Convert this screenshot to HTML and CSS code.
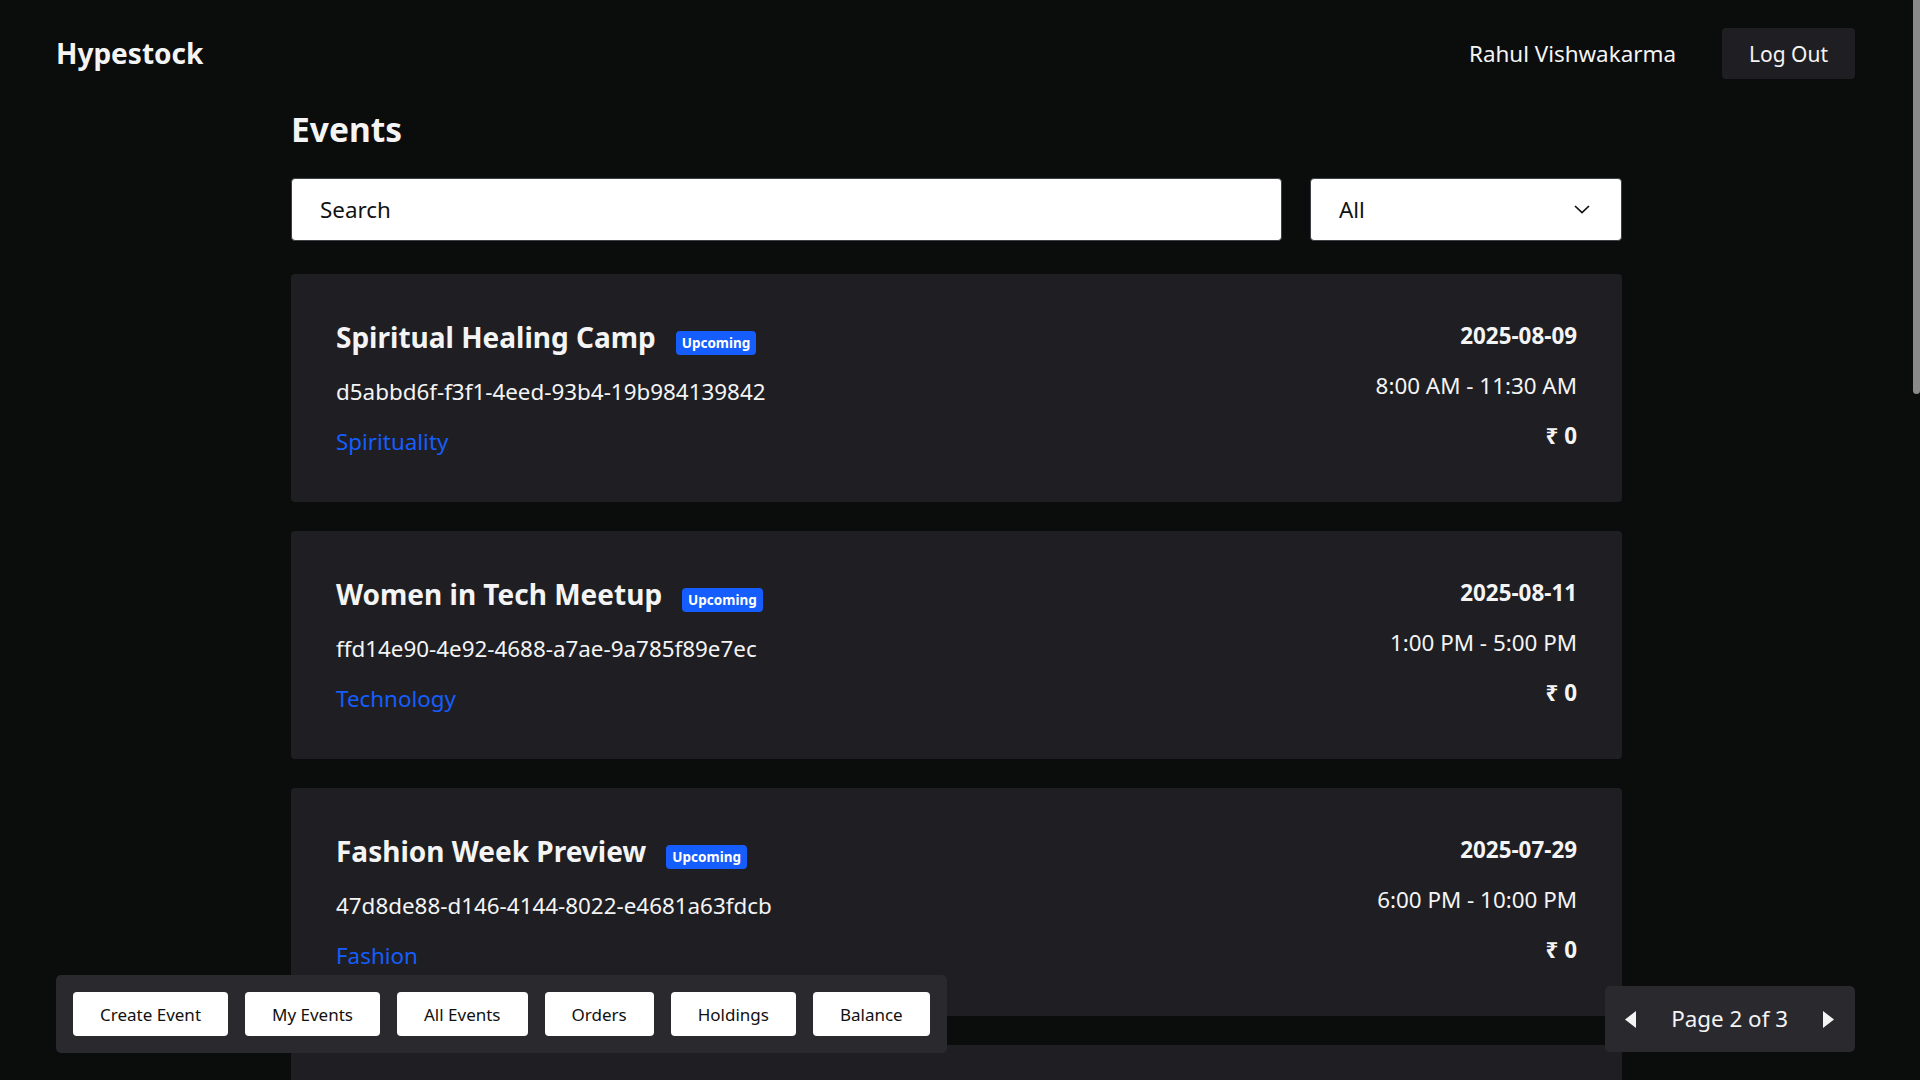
FILE: index.html
```html
<!DOCTYPE html>
<html lang="en">
<head>
<meta charset="utf-8">
<title>Hypestock - Events</title>
<link rel="stylesheet" href="styles.css">
</head>
<body>
<header class="topbar">
  <div class="logo">Hypestock</div>
  <div class="user">
    <span class="user-name">Rahul Vishwakarma</span>
    <button class="logout">Log Out</button>
  </div>
</header>

<main class="content">
  <h1 class="page-title">Events</h1>
  <div class="filters">
    <div class="search">Search</div>
    <div class="select">
      <span>All</span>
      <svg class="chevron" width="16" height="9" viewBox="0 0 16 9"><polyline points="1,1 8,7.5 15,1" fill="none" stroke="#111" stroke-width="1.7"/></svg>
    </div>
  </div>

  <div class="event-list">
    <article class="card">
      <div class="card-left">
        <div class="title-row"><h2 class="event-title">Spiritual Healing Camp</h2><span class="badge">Upcoming</span></div>
        <div class="event-id">d5abbd6f-f3f1-4eed-93b4-19b984139842</div>
        <div class="event-cat">Spirituality</div>
      </div>
      <div class="card-right">
        <div class="event-date">2025-08-09</div>
        <div class="event-time">8:00 AM - 11:30 AM</div>
        <div class="event-price">₹ 0</div>
      </div>
    </article>
    <article class="card">
      <div class="card-left">
        <div class="title-row"><h2 class="event-title">Women in Tech Meetup</h2><span class="badge">Upcoming</span></div>
        <div class="event-id">ffd14e90-4e92-4688-a7ae-9a785f89e7ec</div>
        <div class="event-cat">Technology</div>
      </div>
      <div class="card-right">
        <div class="event-date">2025-08-11</div>
        <div class="event-time">1:00 PM - 5:00 PM</div>
        <div class="event-price">₹ 0</div>
      </div>
    </article>
    <article class="card">
      <div class="card-left">
        <div class="title-row"><h2 class="event-title">Fashion Week Preview</h2><span class="badge">Upcoming</span></div>
        <div class="event-id">47d8de88-d146-4144-8022-e4681a63fdcb</div>
        <div class="event-cat">Fashion</div>
      </div>
      <div class="card-right">
        <div class="event-date">2025-07-29</div>
        <div class="event-time">6:00 PM - 10:00 PM</div>
        <div class="event-price">₹ 0</div>
      </div>
    </article>
    <article class="card">
      <div class="card-left">
        <div class="title-row"><h2 class="event-title">Startup Pitch Night</h2><span class="badge">Upcoming</span></div>
        <div class="event-id">b3c91f2e-7a44-4c1d-9e02-5f6a8d3b1c70</div>
        <div class="event-cat">Business</div>
      </div>
      <div class="card-right">
        <div class="event-date">2025-08-15</div>
        <div class="event-time">7:00 PM - 9:30 PM</div>
        <div class="event-price">₹ 0</div>
      </div>
    </article>
    <article class="card">
      <div class="card-left">
        <div class="title-row"><h2 class="event-title">Indie Music Festival</h2><span class="badge">Upcoming</span></div>
        <div class="event-id">2e8f4a61-93bd-4f07-a1c5-7d20e9b6f4a3</div>
        <div class="event-cat">Music</div>
      </div>
      <div class="card-right">
        <div class="event-date">2025-08-20</div>
        <div class="event-time">4:00 PM - 11:00 PM</div>
        <div class="event-price">₹ 0</div>
      </div>
    </article>
    <article class="card">
      <div class="card-left">
        <div class="title-row"><h2 class="event-title">City Marathon 2025</h2><span class="badge">Upcoming</span></div>
        <div class="event-id">9c1d7e35-5b28-4e6a-8f90-c4a2b1d3e857</div>
        <div class="event-cat">Sports</div>
      </div>
      <div class="card-right">
        <div class="event-date">2025-08-24</div>
        <div class="event-time">5:30 AM - 10:00 AM</div>
        <div class="event-price">₹ 0</div>
      </div>
    </article>
    <article class="card">
      <div class="card-left">
        <div class="title-row"><h2 class="event-title">Street Food Carnival</h2><span class="badge">Upcoming</span></div>
        <div class="event-id">61f0a2d8-c7e3-4b59-9d14-3a8e5f2c6b09</div>
        <div class="event-cat">Food</div>
      </div>
      <div class="card-right">
        <div class="event-date">2025-08-30</div>
        <div class="event-time">12:00 PM - 9:00 PM</div>
        <div class="event-price">₹ 0</div>
      </div>
    </article>
    <article class="card">
      <div class="card-left">
        <div class="title-row"><h2 class="event-title">Photography Workshop</h2><span class="badge">Upcoming</span></div>
        <div class="event-id">d8a4b6c2-1e97-4f3a-b058-e2c7f91a4d36</div>
        <div class="event-cat">Art</div>
      </div>
      <div class="card-right">
        <div class="event-date">2025-09-02</div>
        <div class="event-time">10:00 AM - 2:00 PM</div>
        <div class="event-price">₹ 0</div>
      </div>
    </article>
    <article class="card">
      <div class="card-left">
        <div class="title-row"><h2 class="event-title">Stand-up Comedy Night</h2><span class="badge">Upcoming</span></div>
        <div class="event-id">4b7e2c19-f6d8-4a03-8c5e-91b3d0a7f2e4</div>
        <div class="event-cat">Entertainment</div>
      </div>
      <div class="card-right">
        <div class="event-date">2025-09-06</div>
        <div class="event-time">8:00 PM - 10:30 PM</div>
        <div class="event-price">₹ 0</div>
      </div>
    </article>
    <article class="card">
      <div class="card-left">
        <div class="title-row"><h2 class="event-title">AI &amp; Robotics Expo</h2><span class="badge">Upcoming</span></div>
        <div class="event-id">a0c5f8e3-2d71-4b96-b4e8-6f1a9c2d7e53</div>
        <div class="event-cat">Technology</div>
      </div>
      <div class="card-right">
        <div class="event-date">2025-09-12</div>
        <div class="event-time">9:00 AM - 6:00 PM</div>
        <div class="event-price">₹ 0</div>
      </div>
    </article>
  </div>
</main>

<nav class="bottom-nav">
  <button class="nav-btn">Create Event</button>
  <button class="nav-btn">My Events</button>
  <button class="nav-btn">All Events</button>
  <button class="nav-btn">Orders</button>
  <button class="nav-btn">Holdings</button>
  <button class="nav-btn">Balance</button>
</nav>

<div class="pager">
  <svg class="arrow" width="11" height="17" viewBox="0 0 11 17"><polygon points="11,0 11,17 0,8.5" fill="#f4f4f5"/></svg>
  <span class="pager-text">Page 2 of 3</span>
  <svg class="arrow" width="11" height="17" viewBox="0 0 11 17"><polygon points="0,0 0,17 11,8.5" fill="#f4f4f5"/></svg>
</div>

<div class="scroll-thumb"></div>
</body>
</html>
```

FILE: styles.css
```css
html {
  background: #0b0c0c;
}
body {
  margin: 0 7px 0 0;
  background: #0b0c0c;
  color: #f4f4f5;
  font-family: "Noto Sans", "Open Sans", sans-serif;
}
.scroll-thumb {
  position: fixed;
  top: 0;
  right: 0;
  width: 7px;
  height: 394px;
  background: #8a8a8a;
  border-radius: 0 0 4px 4px;
}
.topbar {
  display: flex;
  align-items: center;
  justify-content: space-between;
  padding: 28px 58px 0 56px;
  height: 51px;
}
.logo {
  font-size: 28px;
  font-weight: 700;
  line-height: 36px;
  margin-top: -2px;
}
.user {
  display: flex;
  align-items: center;
  gap: 46px;
}
.user-name {
  font-size: 22.4px;
  line-height: 30px;
}
.logout {
  background: #1f1f23;
  color: #f4f4f5;
  border: none;
  border-radius: 4px;
  height: 51px;
  padding: 0 27px;
  font-family: inherit;
  font-size: 21px;
}
.content {
  width: 1331px;
  margin: 0 auto;
  padding: 30px 0 145px;
}
.page-title {
  margin: 0;
  font-size: 33.5px;
  line-height: 40px;
  font-weight: 700;
}
.filters {
  display: flex;
  gap: 28px;
  margin-top: 29px;
}
.search,
.select {
  box-sizing: border-box;
  height: 63px;
  background: #fff;
  border: 1px solid #3f3f46;
  border-radius: 4px;
  color: #111;
  font-size: 22.4px;
  display: flex;
  align-items: center;
  padding: 0 28px;
}
.search {
  flex: 1;
}
.select {
  width: 312px;
  justify-content: space-between;
  padding-right: 31px;
}
.event-list {
  display: flex;
  flex-direction: column;
  gap: 29px;
  margin-top: 33px;
}
.card {
  background: #1f1f23;
  border-radius: 4px;
  padding: 45px 45px 44px;
  display: flex;
  justify-content: space-between;
}
.card-left,
.card-right {
  display: flex;
  flex-direction: column;
}
.card-right {
  align-items: flex-end;
  gap: 17px;
}
.title-row {
  display: flex;
  align-items: baseline;
  gap: 20px;
}
.event-title {
  margin: 0;
  font-size: 28px;
  line-height: 36px;
  font-weight: 700;
}
.badge {
  background: #155dfc;
  color: #fff;
  font-size: 13.5px;
  font-weight: 700;
  line-height: 24px;
  padding: 0 6px;
  border-radius: 4px;
}
.event-id {
  font-size: 22.4px;
  line-height: 33px;
  margin-top: 20px;
}
.event-cat {
  font-size: 22.4px;
  line-height: 33px;
  margin-top: 17px;
  color: #155dfc;
}
.event-date,
.event-price {
  font-size: 22.4px;
  line-height: 33px;
  font-weight: 700;
}
.event-time {
  font-size: 22.4px;
  line-height: 33px;
}
.bottom-nav {
  position: fixed;
  left: 56px;
  bottom: 27px;
  display: flex;
  gap: 17px;
  padding: 17px;
  background: #29292e;
  border-radius: 5px;
}
.nav-btn {
  background: #fff;
  color: #111;
  border: none;
  border-radius: 4px;
  height: 44px;
  padding: 0 27px;
  font-family: inherit;
  font-size: 17px;
}
.pager {
  position: fixed;
  right: 65px;
  bottom: 28px;
  height: 66px;
  box-sizing: border-box;
  display: flex;
  align-items: center;
  gap: 35px;
  padding: 0 21px 0 20px;
  background: #29292e;
  border-radius: 5px;
}
.pager-text {
  font-size: 22.4px;
  line-height: 30px;
}
.arrow {
  display: block;
}
```
